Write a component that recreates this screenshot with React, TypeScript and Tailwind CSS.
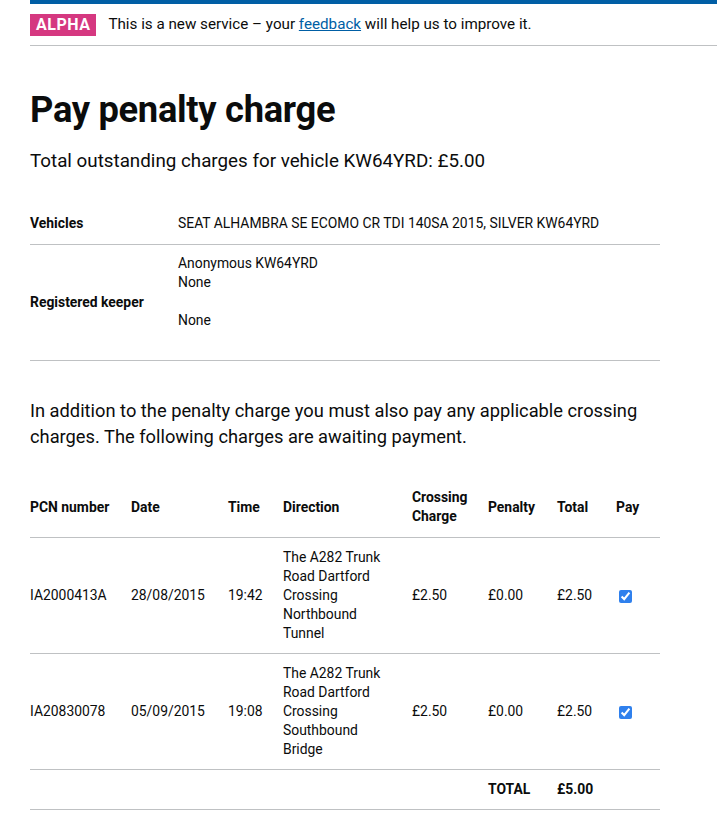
const rows = [
  {
    pcn: "IA2000413A",
    date: "28/08/2015",
    time: "19:42",
    direction: ["The A282 Trunk", "Road Dartford", "Crossing", "Northbound", "Tunnel"],
    crossing: "£2.50",
    penalty: "£0.00",
    total: "£2.50",
  },
  {
    pcn: "IA20830078",
    date: "05/09/2015",
    time: "19:08",
    direction: ["The A282 Trunk", "Road Dartford", "Crossing", "Southbound", "Bridge"],
    crossing: "£2.50",
    penalty: "£0.00",
    total: "£2.50",
  },
];

const App = () => {
  return (
    <div className="min-h-[821px] bg-white text-[#0b0c0c] font-['Roboto',sans-serif]">
      <div className="ml-[30px]">
        <div className="h-[4px] bg-[#005ea5]" />
        <div className="flex items-center gap-3 border-b border-[#bfc1c3] h-[42px]">
          <span className="bg-[#d53880] text-white font-bold text-[16px] leading-[22px] px-[6px] tracking-[0.5px]">
            ALPHA
          </span>
          <span className="text-[15.2px]">
            This is a new service – your{" "}
            <a href="#" className="text-[#005ea5] underline">feedback</a> will help us to improve it.
          </span>
        </div>
      </div>

      <main className="ml-[30px] w-[630px]">
        <h1 className="mt-[40px] text-[36.3px] leading-[48px] font-bold tracking-[-0.3px]">Pay penalty charge</h1>
        <p className="mt-[15px] text-[18.8px] leading-[24px]">Total outstanding charges for vehicle KW64YRD: £5.00</p>

        <table className="mt-[30px] w-full text-[13.9px] leading-[19px] border-collapse">
          <tbody>
            <tr className="border-b border-[#bfc1c3]">
              <th className="w-[148px] text-left font-bold py-[11px]">Vehicles</th>
              <td className="py-[11px]">SEAT ALHAMBRA SE ECOMO CR TDI 140SA 2015, SILVER KW64YRD</td>
            </tr>
            <tr className="border-b border-[#bfc1c3]">
              <th className="text-left font-bold">Registered keeper</th>
              <td className="pt-[9px] pb-[30px]">
                <div>Anonymous KW64YRD</div>
                <div>None</div>
                <div className="h-[19px]" />
                <div>None</div>
              </td>
            </tr>
          </tbody>
        </table>

        <p className="mt-[37px] text-[18.3px] leading-[26px]">
          In addition to the penalty charge you must also pay any applicable crossing charges. The following charges are
          awaiting payment.
        </p>

        <table className="mt-[28px] w-full text-[13.9px] leading-[19px] border-collapse">
          <thead>
            <tr className="border-b border-[#bfc1c3] text-left font-bold">
              <th className="w-[101px] pt-[10px] pb-[11px]">PCN number</th>
              <th className="w-[97px] pt-[10px] pb-[11px]">Date</th>
              <th className="w-[55px] pt-[10px] pb-[11px]">Time</th>
              <th className="w-[129px] pt-[10px] pb-[11px]">Direction</th>
              <th className="w-[76px] pt-[10px] pb-[11px]">Crossing<br />Charge</th>
              <th className="w-[69px] pt-[10px] pb-[11px]">Penalty</th>
              <th className="w-[59px] pt-[10px] pb-[11px]">Total</th>
              <th className="pt-[10px] pb-[11px]">Pay</th>
            </tr>
          </thead>
          <tbody>
            {rows.map((r) => (
              <tr key={r.pcn} className="border-b border-[#bfc1c3]">
                <td>{r.pcn}</td>
                <td>{r.date}</td>
                <td>{r.time}</td>
                <td className="pt-[10px] pb-[10px]">
                  {r.direction.map((d) => (
                    <div key={d}>{d}</div>
                  ))}
                </td>
                <td>{r.crossing}</td>
                <td>{r.penalty}</td>
                <td>{r.total}</td>
                <td>
                  <input type="checkbox" defaultChecked className="ml-[3px] w-[13px] h-[13px] accent-[#2f80ed] align-middle" />
                </td>
              </tr>
            ))}
            <tr className="border-b border-[#bfc1c3] font-bold">
              <td className="py-[10px]" colSpan={5}>&nbsp;</td>
              <td className="py-[10px]">TOTAL</td>
              <td className="py-[10px]">£5.00</td>
              <td className="py-[10px]" />
            </tr>
          </tbody>
        </table>
      </main>
    </div>
  );
};

export default App;
